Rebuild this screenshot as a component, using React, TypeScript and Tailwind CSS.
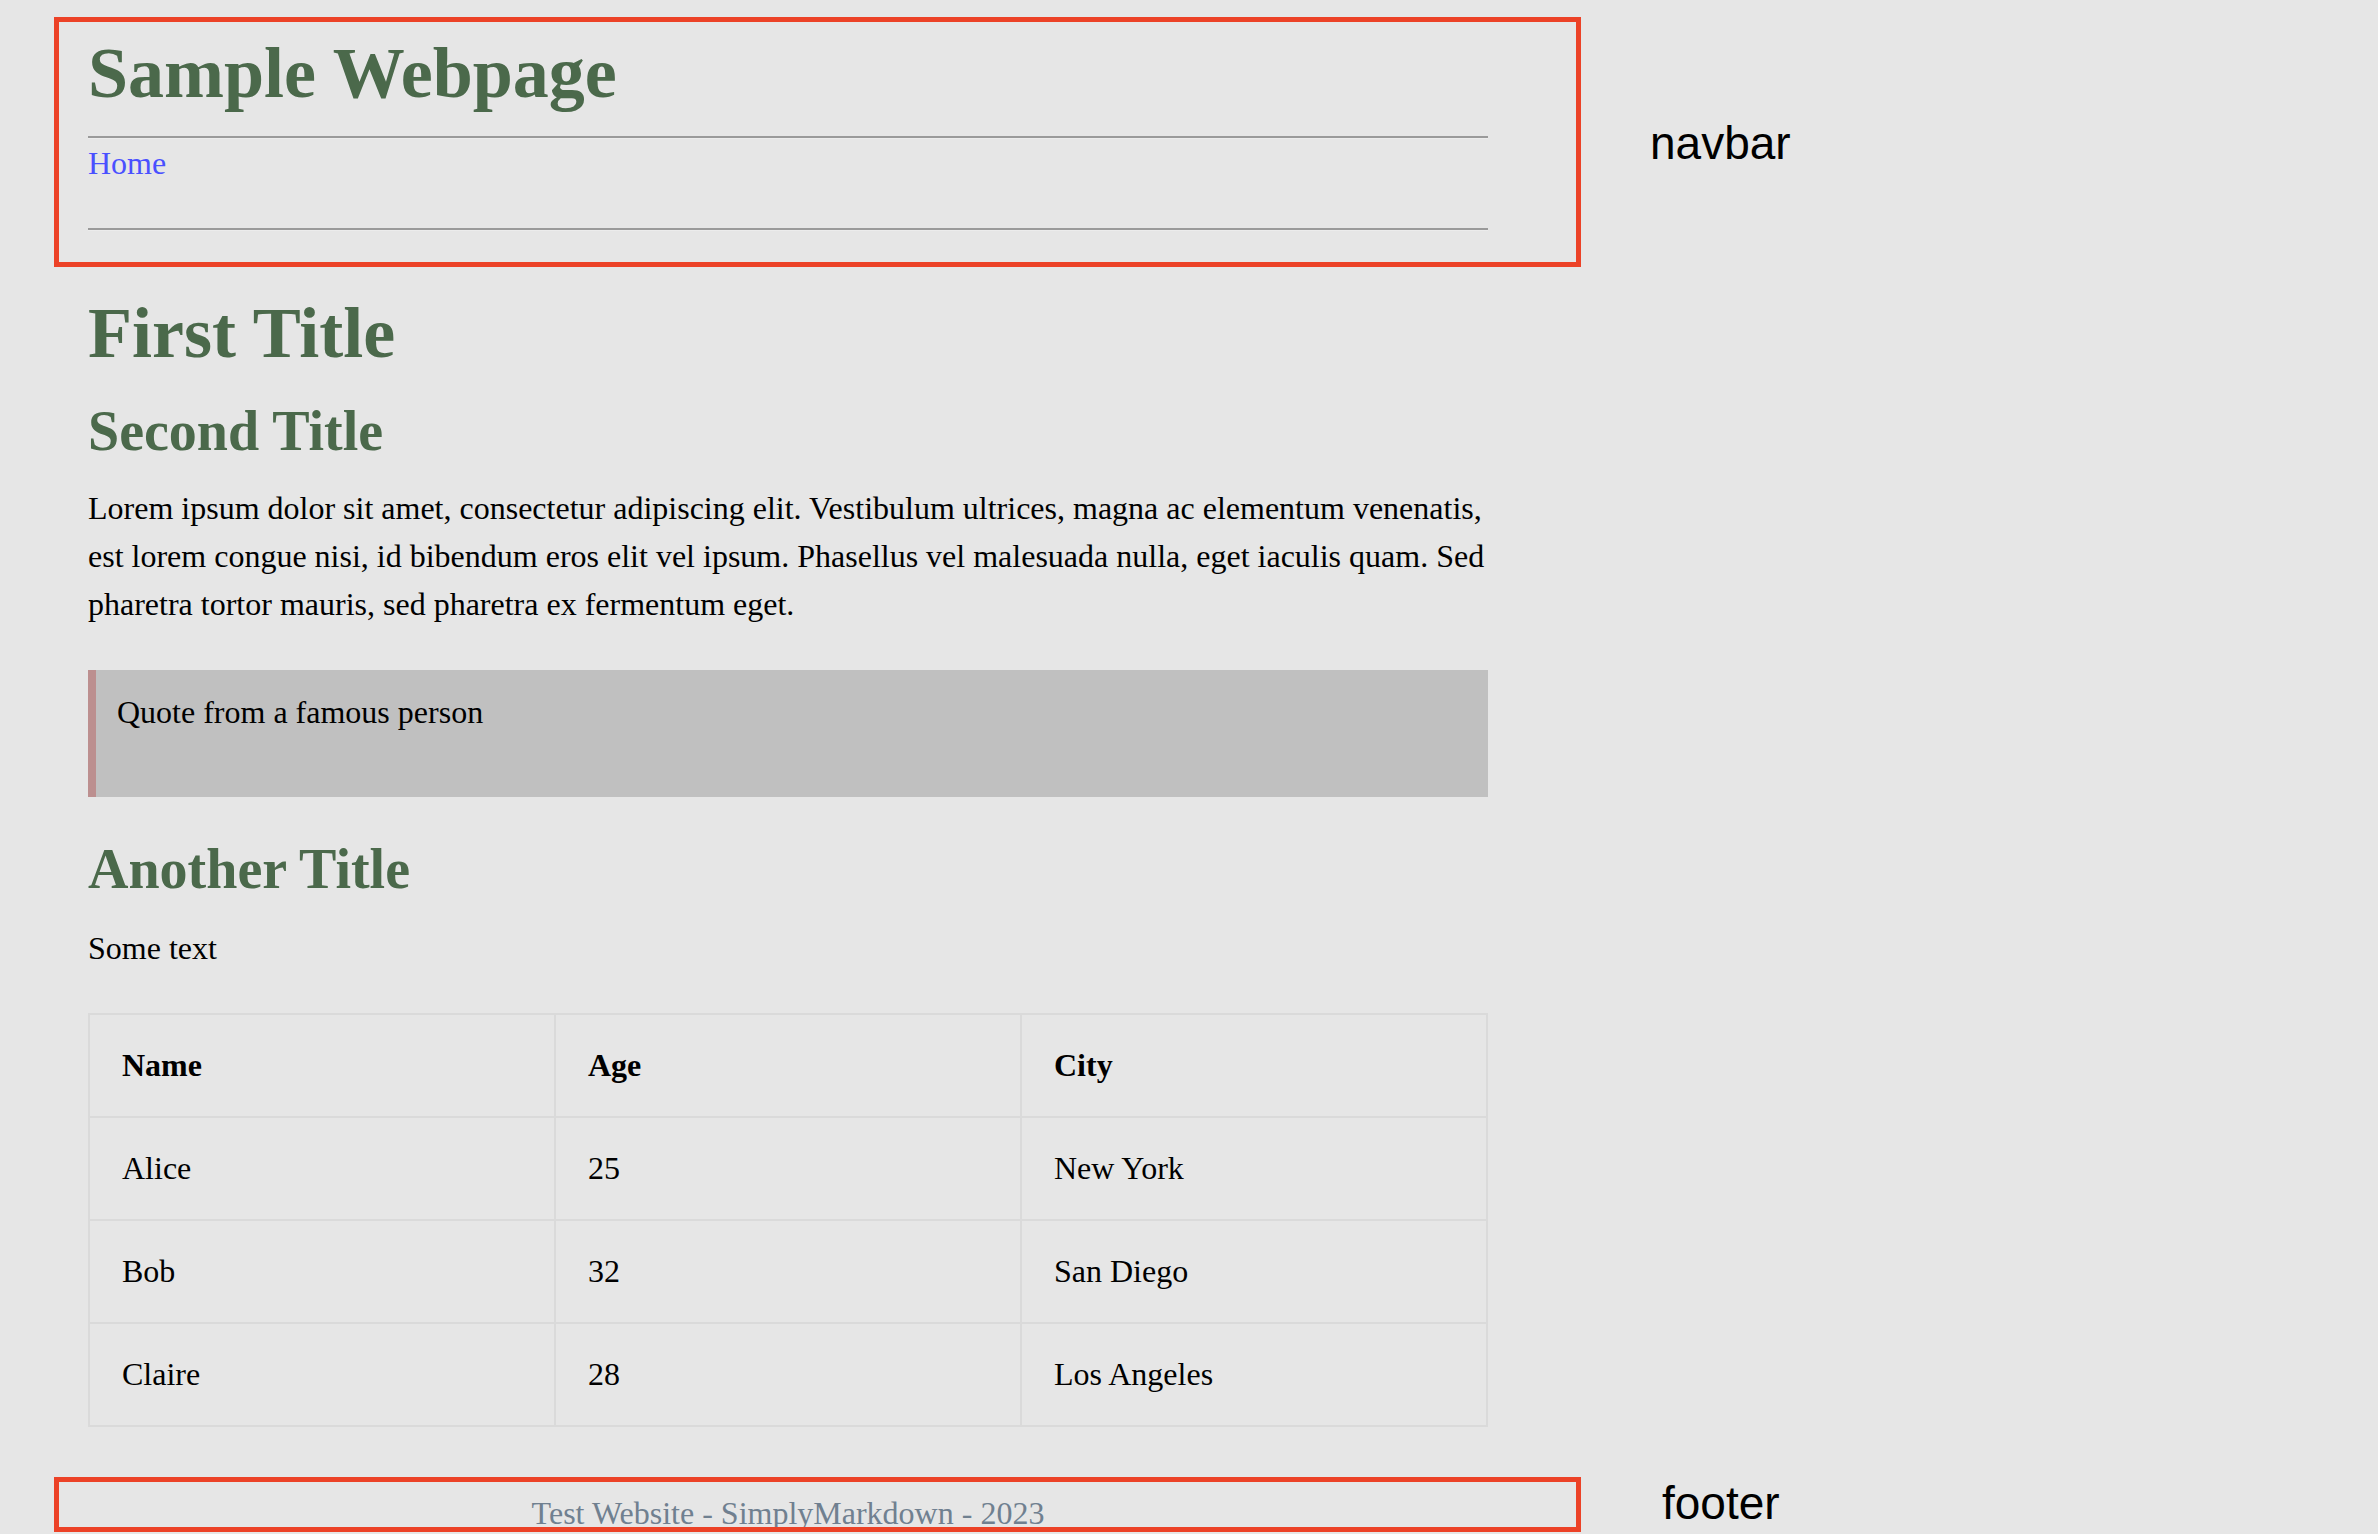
export default function App() {
  const rows = [
    ["Alice", "25", "New York"],
    ["Bob", "32", "San Diego"],
    ["Claire", "28", "Los Angeles"],
  ];
  const cell =
    "h-[103px] border-r-2 border-b-2 border-[#dadada] px-[32px] pt-[32px] text-[32px] leading-[37px]";
  return (
    <div className="min-h-screen w-full overflow-hidden bg-[#e6e6e6] font-['Liberation_Serif',serif] text-black">
      <div className="flex items-start">
        <header className="mt-[17px] ml-[54px] h-[250px] w-[1527px] shrink-0 border-[5px] border-[#ec4227] pl-[29px] pr-[88px]">
          <h1 className="mt-[10px] text-[72px] font-bold leading-[83px] text-[#4b694b]">
            Sample Webpage
          </h1>
          <div className="mt-[21px] h-[3px] border-t-2 border-t-[#9a9a9a] bg-[#ececec]" />
          <a href="#" className="block w-max text-[32px] leading-[48px] text-[#4a50ff]">
            Home
          </a>
          <div className="mt-[41px] h-[3px] border-t-2 border-t-[#9a9a9a] bg-[#ececec]" />
        </header>
        <div className="mt-[117px] ml-[69px] font-['Liberation_Sans',Arial,sans-serif] text-[46px] leading-[53px] text-black">
          navbar
        </div>
      </div>

      <main className="ml-[88px] w-[1400px]">
        <h1 className="mt-[25px] text-[72px] font-bold leading-[83px] text-[#4b694b]">
          First Title
        </h1>
        <h2 className="mt-[24px] text-[56px] font-bold leading-[64px] text-[#4b694b]">
          Second Title
        </h2>
        <p className="mt-[21px] text-[32px] leading-[48px]">
          <span className="block whitespace-nowrap">
            Lorem ipsum dolor sit amet, consectetur adipiscing elit. Vestibulum ultrices, magna ac elementum venenatis,
          </span>
          <span className="block whitespace-nowrap">
            est lorem congue nisi, id bibendum eros elit vel ipsum. Phasellus vel malesuada nulla, eget iaculis quam. Sed
          </span>
          <span className="block whitespace-nowrap">
            pharetra tortor mauris, sed pharetra ex fermentum eget.
          </span>
        </p>
        <blockquote className="mt-[42px] h-[127px] border-l-[8px] border-[#bc8f8f] bg-[#c0c0c0] pl-[21px] pt-[18px] text-[32px] leading-[48px]">
          Quote from a famous person
        </blockquote>
        <h2 className="mt-[40px] text-[56px] font-bold leading-[64px] text-[#4b694b]">
          Another Title
        </h2>
        <p className="mt-[23px] text-[32px] leading-[48px]">Some text</p>

        <div className="mt-[41px] grid grid-cols-3 border-t-2 border-l-2 border-[#dadada]">
          <div className={cell + " font-bold"}>Name</div>
          <div className={cell + " font-bold"}>Age</div>
          <div className={cell + " font-bold"}>City</div>
          {rows.map((r) =>
            r.map((c, i) => (
              <div key={r[0] + i} className={cell}>
                {c}
              </div>
            ))
          )}
        </div>
      </main>

      <div className="mt-[50px] flex items-start">
        <footer className="ml-[54px] h-[55px] w-[1527px] shrink-0 overflow-hidden border-[5px] border-[#ec4227] pl-[29px] pr-[88px]">
          <p className="pt-[7px] text-center text-[32px] leading-[48px] text-[#708090]">
            Test Website - SimplyMarkdown - 2023
          </p>
        </footer>
        <div className="ml-[81px] font-['Liberation_Sans',Arial,sans-serif] text-[46px] leading-[53px] text-black">
          footer
        </div>
      </div>
    </div>
  );
}
